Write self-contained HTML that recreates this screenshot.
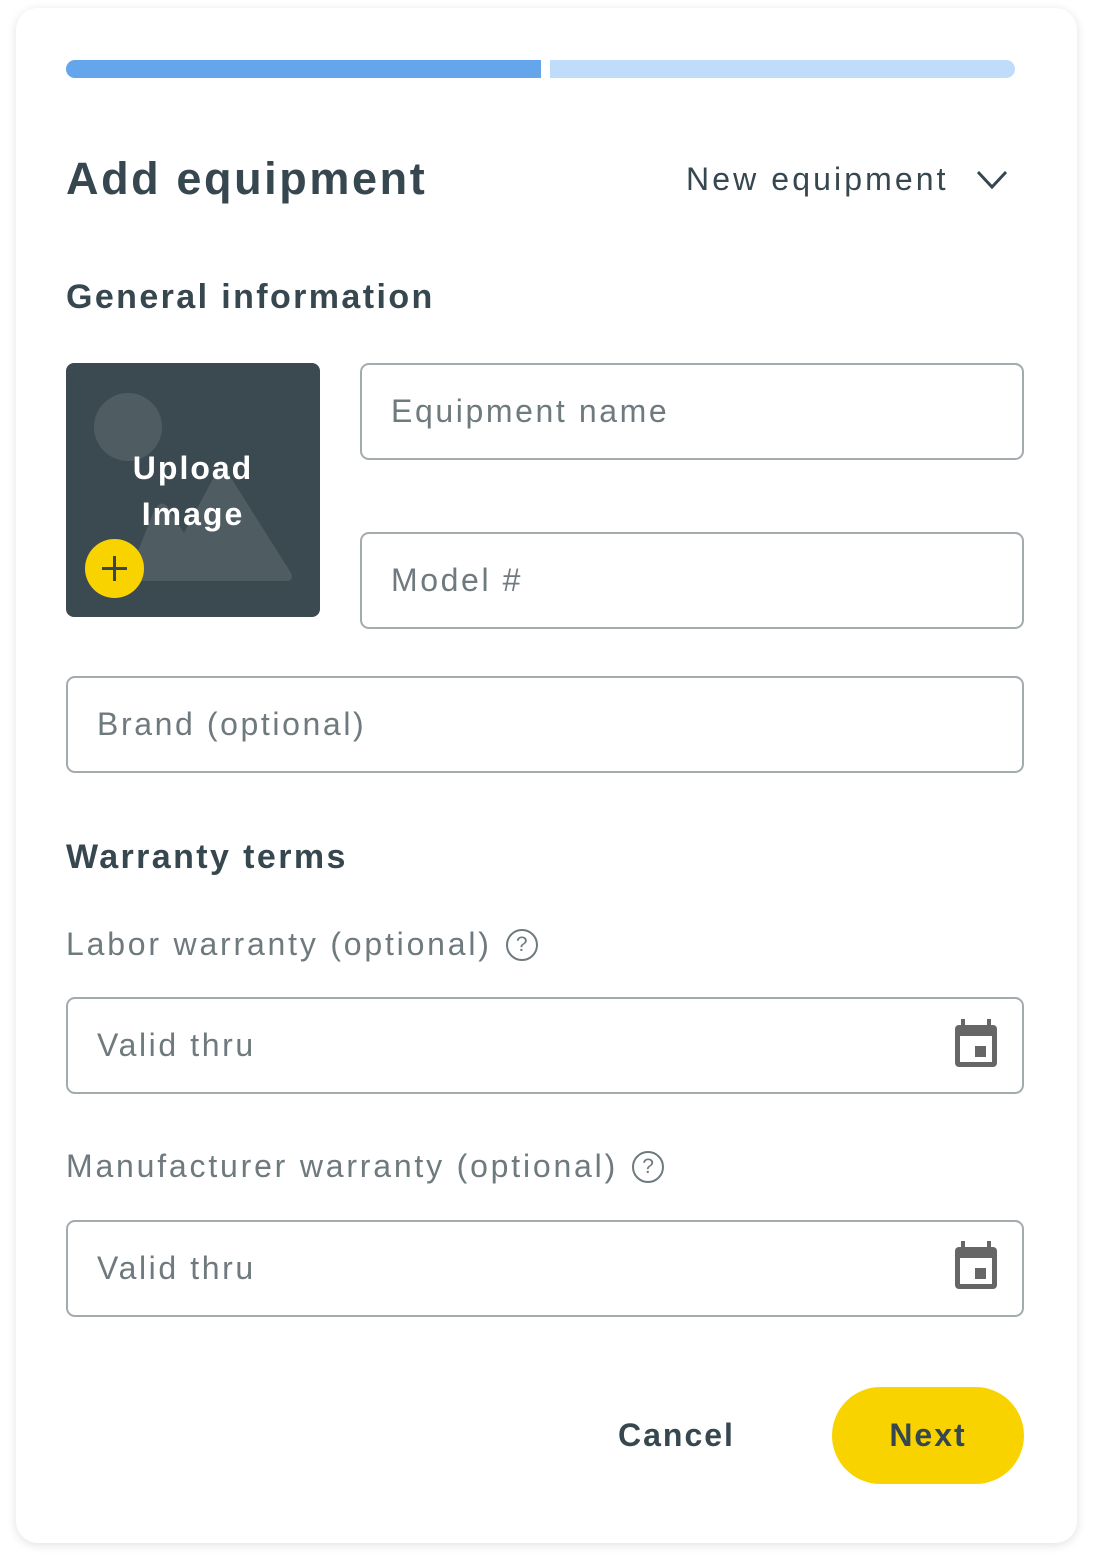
<!DOCTYPE html>
<html><head><style>
*{box-sizing:border-box;margin:0;padding:0}
body{width:1093px;height:1567px;background:#fff;font-family:"Liberation Sans",sans-serif;color:#37474f;position:relative;overflow:hidden}
.card{position:absolute;left:16px;top:8px;width:1061px;height:1535px;border-radius:22px;background:#fff;box-shadow:0 2px 10px rgba(0,0,0,.12)}
.a{position:absolute}
.inp{position:absolute;border:2px solid #a3abae;border-radius:9px;height:97px;font-size:32px;color:#6f7a7e;padding-left:29px;display:flex;align-items:center;letter-spacing:2.6px}
.lbl{font-size:32px;color:#6f7a7e;letter-spacing:2.8px}
.q{display:inline-block;width:32px;height:32px;border:2.5px solid #6f7a7e;border-radius:50%;font-size:21px;text-align:center;line-height:27px;vertical-align:4px;margin-left:14px;letter-spacing:0}
</style></head><body>
<div class="card"></div>
<div class="a" style="left:66px;top:60px;width:475px;height:18px;background:#64a5ec;border-radius:9px 0 0 9px"></div>
<div class="a" style="left:550px;top:60px;width:465px;height:18px;background:#bfdcfb;border-radius:0 9px 9px 0"></div>
<div class="a" style="left:66px;top:153px;font-size:45px;font-weight:bold;letter-spacing:2.6px">Add equipment</div>
<div class="a" style="left:686px;top:161px;font-size:32px;letter-spacing:3.1px">New equipment</div>
<svg class="a" style="left:975px;top:168px" width="36" height="24"><path d="M3 4 L17 19 L31 4" stroke="#37474f" stroke-width="3" fill="none"/></svg>
<div class="a" style="left:66px;top:278px;font-size:34px;font-weight:bold;letter-spacing:2.4px">General information</div>
<div class="a" style="left:66px;top:363px;width:254px;height:254px;background:#3b4a51;border-radius:8px;overflow:hidden">
<div class="a" style="left:28px;top:30px;width:68px;height:68px;border-radius:50%;background:#4f5d63"></div>
<svg class="a" style="left:0;top:0" width="254" height="254"><path d="M60 218 L88 148 Q96 133 104 148 L118 170 L150 110 Q156 100 162 110 L225 210 Q228 218 220 218 Z" fill="#4f5d63"/></svg>
<div class="a" style="left:0;width:254px;top:82px;text-align:center;color:#fff;font-size:32px;font-weight:bold;line-height:46px;letter-spacing:2px">Upload<br>Image</div>
<div class="a" style="left:19px;top:176px;width:59px;height:59px;border-radius:50%;background:#f8d300"></div>
<svg class="a" style="left:19px;top:176px" width="59" height="59"><path d="M29.5 17 V42 M17 29.5 H42" stroke="#37474f" stroke-width="3"/></svg>
</div>
<div class="inp" style="left:360px;top:363px;width:664px">Equipment name</div>
<div class="inp" style="left:360px;top:532px;width:664px">Model #</div>
<div class="inp" style="left:66px;top:676px;width:958px">Brand (optional)</div>
<div class="a" style="left:66px;top:838px;font-size:34px;font-weight:bold;letter-spacing:2.4px">Warranty terms</div>
<div class="a lbl" style="left:66px;top:926px">Labor warranty (optional)<span class="q">?</span></div>
<div class="inp" style="left:66px;top:997px;width:958px">Valid thru</div>
<div class="a lbl" style="left:66px;top:1148px">Manufacturer warranty (optional)<span class="q">?</span></div>
<div class="inp" style="left:66px;top:1220px;width:958px">Valid thru</div>
<svg class="a" style="left:952px;top:1019px" width="48" height="50"><rect x="9" y="0" width="4" height="8" fill="#666"/><rect x="35" y="0" width="4" height="8" fill="#666"/><rect x="3" y="6" width="42" height="42" rx="4" fill="#666"/><rect x="8" y="17" width="32" height="26" fill="#fff"/><rect x="23" y="27" width="11" height="11" fill="#666"/></svg>
<svg class="a" style="left:952px;top:1241px" width="48" height="50"><rect x="9" y="0" width="4" height="8" fill="#666"/><rect x="35" y="0" width="4" height="8" fill="#666"/><rect x="3" y="6" width="42" height="42" rx="4" fill="#666"/><rect x="8" y="17" width="32" height="26" fill="#fff"/><rect x="23" y="27" width="11" height="11" fill="#666"/></svg>
<div class="a" style="left:618px;top:1417px;font-size:32px;font-weight:bold;letter-spacing:2px">Cancel</div>
<div class="a" style="left:832px;top:1387px;width:192px;height:97px;border-radius:49px;background:#f8d300;font-size:32px;font-weight:bold;text-align:center;line-height:97px;letter-spacing:2px">Next</div>
</body></html>
